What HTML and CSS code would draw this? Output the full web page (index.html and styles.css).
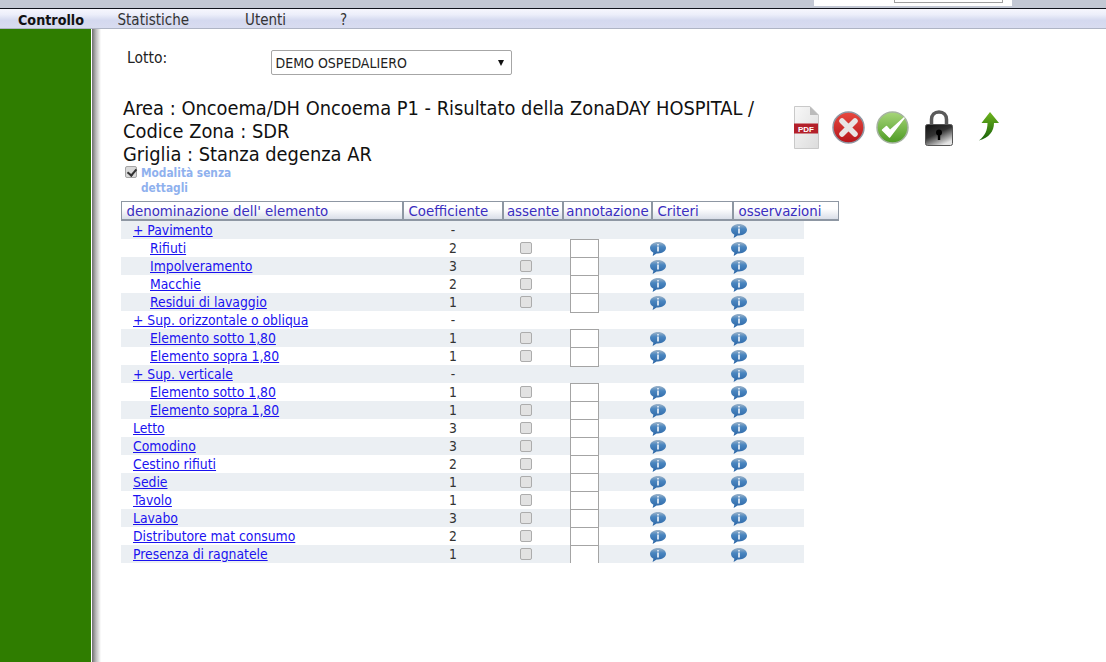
FILE: index.html
```html
<!DOCTYPE html>
<html lang="it">
<head>
<meta charset="utf-8">
<title>Controllo</title>
<link rel="stylesheet" href="styles.css">
</head>
<body>
<svg class="defs" width="0" height="0" aria-hidden="true">
  <defs>
    <linearGradient id="bub" x1="0" y1="0" x2="0" y2="1"><stop offset="0" stop-color="#9fb4c8"/><stop offset=".35" stop-color="#4a86c0"/><stop offset="1" stop-color="#2a64a4"/></linearGradient>
    <linearGradient id="red" x1="0" y1="0" x2="0" y2="1"><stop offset="0" stop-color="#e8493f"/><stop offset="1" stop-color="#b5151b"/></linearGradient>
    <linearGradient id="grn" x1="0" y1="0" x2="0" y2="1"><stop offset="0" stop-color="#a8d67a"/><stop offset="1" stop-color="#4c9a22"/></linearGradient>
    <linearGradient id="lck" x1="0" y1="0" x2=".6" y2="1"><stop offset="0" stop-color="#111"/><stop offset=".5" stop-color="#333"/><stop offset="1" stop-color="#e4e4e4"/></linearGradient>
    <linearGradient id="arr" x1="0" y1="0" x2="0" y2="1"><stop offset="0" stop-color="#6fb51e"/><stop offset="1" stop-color="#17600a"/></linearGradient>
    <linearGradient id="pap" x1="0" y1="0" x2="1" y2="1"><stop offset="0" stop-color="#f8f8f8"/><stop offset="1" stop-color="#dcdcdc"/></linearGradient>
    <symbol id="info" viewBox="0 0 16 14">
      <path d="M8 0C12.400 0 16 2.600 16 5.800S12.400 11.500 8 11.500H6.600L2.600 14L3.400 10.800C1.300 9.800 0 8 0 5.800C0 2.600 3.600 0 8 0Z" fill="url(#bub)"/>
      <rect x="7" y="2" width="2" height="1.500" fill="#cfdeee"/>
      <rect x="7" y="4.500" width="2" height="5" fill="#cfdeee"/>
    </symbol>
  </defs>
</svg>
<div class="topstrip">
  <div class="topbox"><span class="topfield"></span></div>
</div>
<nav class="menu">
  <a class="menu-item menu-active">Controllo</a>
  <a class="menu-item menu-stat">Statistiche</a>
  <a class="menu-item menu-ut">Utenti</a>
  <a class="menu-item">?</a>
</nav>
<div class="page">
  <aside class="side"></aside>
  <div class="shadow"></div>
  <main class="main">
    <div class="lotto">
      <label class="lotto-label">Lotto:</label>
      <div class="select"><span>DEMO OSPEDALIERO</span><span class="caret"></span></div>
    </div>
    <div class="head">
      <h1 class="title">Area : Oncoema/DH Oncoema P1 - Risultato della ZonaDAY HOSPITAL /<br>Codice Zona : SDR<br>Griglia : Stanza degenza AR</h1>
      <div class="tools">
        <svg class="ic-pdf" width="25" height="44" viewBox="0 0 25 44"><path d="M.5 .5H16L24.500 9V42.500H.5Z" fill="url(#pap)" stroke="#c9c9c9"/><path d="M16 .5V9H24.500Z" fill="#bbb"/><rect x="0" y="17.500" width="24" height="10" fill="#b3202a"/><text x="12" y="25.800" class="pdf-t" text-anchor="middle">PDF</text></svg>
        <svg class="ic-round" width="34" height="34" viewBox="0 0 34 34"><circle cx="16.500" cy="16.500" r="15.500" fill="url(#red)" stroke="#8f97a3" stroke-width="1.500"/><path d="M10 10L23 23M23 10L10 23" stroke="#e9e4e4" stroke-width="5.500" stroke-linecap="round"/></svg>
        <svg class="ic-round" width="34" height="34" viewBox="0 0 34 34"><circle cx="16.500" cy="16.500" r="15.500" fill="url(#grn)" stroke="#a5b3a0" stroke-width="1.500"/><path d="M6.500 19L13.500 26L28 7L14 19.500L10.500 15.500Z" fill="#fff" stroke="#fff" stroke-width="1.500" stroke-linejoin="round"/></svg>
        <svg class="ic-lock" width="30" height="36" viewBox="0 0 30 36"><path d="M7.500 16V9.500C7.500 5 10.500 2 15 2S22.500 5 22.500 9.500V16" fill="none" stroke="#5a5a5a" stroke-width="3.500"/><rect x="1.500" y="14.500" width="27" height="21" rx="2" fill="url(#lck)" stroke="#555"/><circle cx="15" cy="22.500" r="3" fill="#000"/><rect x="13.800" y="23" width="2.400" height="7" fill="#000"/></svg>
        <svg class="ic-arr" width="22" height="30" viewBox="0 0 22 30"><path d="M12 1L21 12H16C16 20 11 27 1 29.500C7 25 9.500 19 9.500 12H3.500Z" fill="url(#arr)"/></svg>
      </div>
    </div>
    <div class="mode">
      <input class="mode-check" type="checkbox" checked disabled>
      <span class="mode-text">Modalità senza<br>dettagli</span>
    </div>
    <div class="thead">
      <div class="th">denominazione dell' elemento</div>
      <div class="th">Coefficiente</div>
      <div class="th th-c">assente</div>
      <div class="th th-c">annotazione</div>
      <div class="th">Criteri</div>
      <div class="th">osservazioni</div>
    </div>
    <div class="tbody">
      <div class="row alt"><div class="name"><a href="#">+ Pavimento</a></div><div class="coef">-</div><div></div><div></div><div></div><div class="ico"><svg class="info"><use href="#info"/></svg></div></div>
      <div class="row"><div class="name sub"><a href="#">Rifiuti</a></div><div class="coef">2</div><div class="chk"><input type="checkbox" disabled></div><div class="note"><span class="box"></span></div><div class="ico"><svg class="info"><use href="#info"/></svg></div><div class="ico"><svg class="info"><use href="#info"/></svg></div></div>
      <div class="row alt"><div class="name sub"><a href="#">Impolveramento</a></div><div class="coef">3</div><div class="chk"><input type="checkbox" disabled></div><div class="note"><span class="box"></span></div><div class="ico"><svg class="info"><use href="#info"/></svg></div><div class="ico"><svg class="info"><use href="#info"/></svg></div></div>
      <div class="row"><div class="name sub"><a href="#">Macchie</a></div><div class="coef">2</div><div class="chk"><input type="checkbox" disabled></div><div class="note"><span class="box"></span></div><div class="ico"><svg class="info"><use href="#info"/></svg></div><div class="ico"><svg class="info"><use href="#info"/></svg></div></div>
      <div class="row alt"><div class="name sub"><a href="#">Residui di lavaggio</a></div><div class="coef">1</div><div class="chk"><input type="checkbox" disabled></div><div class="note"><span class="box"></span></div><div class="ico"><svg class="info"><use href="#info"/></svg></div><div class="ico"><svg class="info"><use href="#info"/></svg></div></div>
      <div class="row"><div class="name"><a href="#">+ Sup. orizzontale o obliqua</a></div><div class="coef">-</div><div></div><div></div><div></div><div class="ico"><svg class="info"><use href="#info"/></svg></div></div>
      <div class="row alt"><div class="name sub"><a href="#">Elemento sotto 1,80</a></div><div class="coef">1</div><div class="chk"><input type="checkbox" disabled></div><div class="note"><span class="box"></span></div><div class="ico"><svg class="info"><use href="#info"/></svg></div><div class="ico"><svg class="info"><use href="#info"/></svg></div></div>
      <div class="row"><div class="name sub"><a href="#">Elemento sopra 1,80</a></div><div class="coef">1</div><div class="chk"><input type="checkbox" disabled></div><div class="note"><span class="box"></span></div><div class="ico"><svg class="info"><use href="#info"/></svg></div><div class="ico"><svg class="info"><use href="#info"/></svg></div></div>
      <div class="row alt"><div class="name"><a href="#">+ Sup. verticale</a></div><div class="coef">-</div><div></div><div></div><div></div><div class="ico"><svg class="info"><use href="#info"/></svg></div></div>
      <div class="row"><div class="name sub"><a href="#">Elemento sotto 1,80</a></div><div class="coef">1</div><div class="chk"><input type="checkbox" disabled></div><div class="note"><span class="box"></span></div><div class="ico"><svg class="info"><use href="#info"/></svg></div><div class="ico"><svg class="info"><use href="#info"/></svg></div></div>
      <div class="row alt"><div class="name sub"><a href="#">Elemento sopra 1,80</a></div><div class="coef">1</div><div class="chk"><input type="checkbox" disabled></div><div class="note"><span class="box"></span></div><div class="ico"><svg class="info"><use href="#info"/></svg></div><div class="ico"><svg class="info"><use href="#info"/></svg></div></div>
      <div class="row"><div class="name"><a href="#">Letto</a></div><div class="coef">3</div><div class="chk"><input type="checkbox" disabled></div><div class="note"><span class="box"></span></div><div class="ico"><svg class="info"><use href="#info"/></svg></div><div class="ico"><svg class="info"><use href="#info"/></svg></div></div>
      <div class="row alt"><div class="name"><a href="#">Comodino</a></div><div class="coef">3</div><div class="chk"><input type="checkbox" disabled></div><div class="note"><span class="box"></span></div><div class="ico"><svg class="info"><use href="#info"/></svg></div><div class="ico"><svg class="info"><use href="#info"/></svg></div></div>
      <div class="row"><div class="name"><a href="#">Cestino rifiuti</a></div><div class="coef">2</div><div class="chk"><input type="checkbox" disabled></div><div class="note"><span class="box"></span></div><div class="ico"><svg class="info"><use href="#info"/></svg></div><div class="ico"><svg class="info"><use href="#info"/></svg></div></div>
      <div class="row alt"><div class="name"><a href="#">Sedie</a></div><div class="coef">1</div><div class="chk"><input type="checkbox" disabled></div><div class="note"><span class="box"></span></div><div class="ico"><svg class="info"><use href="#info"/></svg></div><div class="ico"><svg class="info"><use href="#info"/></svg></div></div>
      <div class="row"><div class="name"><a href="#">Tavolo</a></div><div class="coef">1</div><div class="chk"><input type="checkbox" disabled></div><div class="note"><span class="box"></span></div><div class="ico"><svg class="info"><use href="#info"/></svg></div><div class="ico"><svg class="info"><use href="#info"/></svg></div></div>
      <div class="row alt"><div class="name"><a href="#">Lavabo</a></div><div class="coef">3</div><div class="chk"><input type="checkbox" disabled></div><div class="note"><span class="box"></span></div><div class="ico"><svg class="info"><use href="#info"/></svg></div><div class="ico"><svg class="info"><use href="#info"/></svg></div></div>
      <div class="row"><div class="name"><a href="#">Distributore mat consumo</a></div><div class="coef">2</div><div class="chk"><input type="checkbox" disabled></div><div class="note"><span class="box"></span></div><div class="ico"><svg class="info"><use href="#info"/></svg></div><div class="ico"><svg class="info"><use href="#info"/></svg></div></div>
      <div class="row alt"><div class="name"><a href="#">Presenza di ragnatele</a></div><div class="coef">1</div><div class="chk"><input type="checkbox" disabled></div><div class="note"><span class="box"></span></div><div class="ico"><svg class="info"><use href="#info"/></svg></div><div class="ico"><svg class="info"><use href="#info"/></svg></div></div>
    </div>
  </main>
</div>
</body>
</html>
```
FILE: styles.css
```css
* { box-sizing: border-box; }
html, body { margin: 0; height: 100%; overflow: hidden; }
body { font-family: "DejaVu Sans Condensed", "DejaVu Sans", sans-serif; font-stretch: condensed; font-size: 14px; color: #222; background: #fff; display: flex; flex-direction: column; }
.defs { position: absolute; }
.topstrip { height: 9px; flex: none; background: #c3c8d4; border-bottom: 1px solid #10131c; display: flex; justify-content: flex-end; padding-right: 94px; }
.topbox { width: 198px; height: 6px; background: #fff; padding-left: 80px; }
.topfield { display: block; width: 109px; height: 3px; background: #fff; border: 1px solid #a0a0a0; border-top: 0; }
.menu { height: 20px; flex: none; display: flex; align-items: center; padding: 2px 0 0 18px; background: linear-gradient(#f7f7fd 0, #eceefa 30%, #d4d9ef 60%, #d8dcf0 100%); border-bottom: 1px solid #aeb4c4; color: #333; font-size: 15px; }
.menu-item { width: 99.500px; color: #333; }
.menu-active { font-weight: bold; font-size: 14.200px; color: #111; }
.menu-stat { width: 127.500px; }
.menu-ut { width: 95px; }
.page { flex: 1; display: flex; min-height: 0; }
.side { width: 91px; background: #2f7d00; flex: none; }
.shadow { width: 10px; flex: none; background: linear-gradient(90deg, #fff 0, #fff 10%, #777 15%, #bbb 50%, #fff 100%); }
.main { flex: 1; padding: 21px 0 0 20px; min-width: 0; }
.lotto { display: flex; height: 26px; }
.lotto-label { width: 150px; padding: 0 0 0 6px; line-height: 16px; font-size: 15.500px; }
.select { width: 241px; height: 25px; border: 1px solid #a6a6a6; border-radius: 2px; display: flex; justify-content: space-between; align-items: center; padding: 0 7px 0 3.500px; font-size: 14px; }
.caret { width: 0; height: 0; border: 3.500px solid transparent; border-top: 6px solid #111; border-bottom: 0; }
.head { display: flex; margin-top: 21px; margin-left: 2px; }
.title { margin: 0; width: 670.500px; flex: none; font-size: 19.850px; font-weight: normal; line-height: 23px; color: #111; }
.tools { height: 46px; margin-top: 8px; display: flex; align-items: center; }
.ic-pdf { margin-right: 13px; }
.ic-round { margin-right: 10.500px; }
.ic-lock { margin-left: 3px; margin-right: 24px; margin-top: -1px; }
.ic-arr { margin-top: -5px; }
.pdf-t { font: bold 8px "Liberation Sans", sans-serif; fill: #fff; }
.mode { display: flex; margin: 0 0 0 4px; height: 35px; align-items: flex-start; }
.mode-check { appearance: none; position: relative; width: 12px; height: 12px; margin: 0 4px 0 0; background: #d9d9d9; border: 1px solid #a5a5a5; border-radius: 2px; }
.mode-check::after { content: ""; position: absolute; left: 3px; top: 0; width: 4px; height: 7px; border: solid #333; border-width: 0 2px 2px 0; transform: rotate(40deg); }
.mode-text { font-size: 11.800px; font-weight: bold; line-height: 15px; color: #8fb1ee; }
.thead { display: grid; grid-template-columns: 282px 100px 60px 89px 81px 106px; width: 718px; height: 20px; }
.th { border: 2px solid #8e97a3; border-left-width: 1px; border-right-width: 1px; border-top: 1px solid #8e97a3; background: linear-gradient(#fff, #fff 40%, #d9deE8); color: #3a2ec0; padding-left: 4.500px; line-height: 18px; white-space: nowrap; overflow: hidden; font-size: 14.850px; }
.th-c { padding-left: 0; text-align: center; }
.tbody { width: 683px; overflow: hidden; }
.row { display: grid; grid-template-columns: 282px 100px 60px 89px 81px 71px; height: 18px; line-height: 18px; font-size: 13.800px; }
.alt { background: #ebeff3; }
.name { padding-left: 12px; white-space: nowrap; }
.sub { padding-left: 29px; }
.name a { color: #1a12f0; }
.coef { text-align: center; color: #333; }
.chk { display: flex; padding-left: 17px; align-items: center; }
.chk input { appearance: none; width: 12px; height: 12px; margin: 0; background: #e2e2e2; border: 1px solid #acacac; border-radius: 2px; }
.note { padding-left: 7px; height: 18px; }
.box { display: block; width: 29px; height: 20px; background: #fff; border: 1px solid #a4a4a4; }
.ico { display: flex; margin-left: -2px; padding-top: 3px; align-items: flex-start; }
.info { width: 16px; height: 14px; display: block; }
```
